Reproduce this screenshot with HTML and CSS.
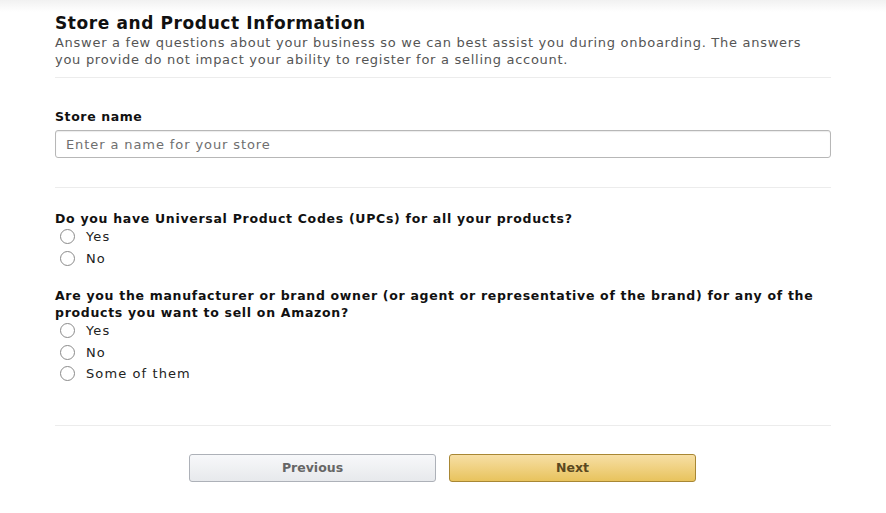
FILE: index.html
```html
<!DOCTYPE html>
<html>
<head>
<meta charset="utf-8">
<link rel="stylesheet" href="styles.css">
</head>
<body>
<div class="topshade"></div>
<main class="page">
  <section class="intro">
    <h1 class="title">Store and Product Information</h1>
    <p class="desc">Answer a few questions about your business so we can best assist you during onboarding. The answers you provide do not impact your ability to register for a selling account.</p>
  </section>
  <section class="block store">
    <label class="label" for="store">Store name</label>
    <input class="input" id="store" type="text" placeholder="Enter a name for your store">
  </section>
  <section class="block questions">
    <div class="question">
      <div class="qtext">Do you have Universal Product Codes (UPCs) for all your products?</div>
      <label class="radio"><span class="dot"></span>Yes</label>
      <label class="radio"><span class="dot"></span>No</label>
    </div>
    <div class="question">
      <div class="qtext">Are you the manufacturer or brand owner (or agent or representative of the brand) for any of the products you want to sell on Amazon?</div>
      <label class="radio"><span class="dot"></span>Yes</label>
      <label class="radio"><span class="dot"></span>No</label>
      <label class="radio"><span class="dot"></span>Some of them</label>
    </div>
  </section>
  <section class="actions">
    <button class="btn prev">Previous</button>
    <button class="btn next">Next</button>
  </section>
</main>
</body>
</html>
```
FILE: styles.css
```css
* { box-sizing: border-box; }
html, body { margin: 0; padding: 0; background: #fff; }
body {
  font-family: "DejaVu Sans", "Open Sans", sans-serif;
  color: #111;
  width: 886px;
  height: 513px;
  overflow: hidden;
  position: relative;
}
.topshade {
  position: absolute;
  top: 0; left: 0; right: 0;
  height: 12px;
  background: linear-gradient(to bottom, #f1f1f1, rgba(255,255,255,0));
}
.page {
  position: relative;
  width: 776px;
  margin-left: 55px;
  padding-top: 12px;
}
.title {
  margin: 0;
  font-size: 17px;
  font-weight: 700;
  letter-spacing: 0.6px;
  line-height: 22px;
  color: #111;
}
.desc {
  margin: 0;
  font-size: 13px;
  letter-spacing: 0.72px;
  line-height: 17px;
  color: #555;
  padding-bottom: 9px;
  border-bottom: 1px solid #ececec;
}
.store {
  padding-top: 31px;
  padding-bottom: 29px;
  border-bottom: 1px solid #ececec;
}
.label {
  display: block;
  font-size: 12.5px;
  font-weight: 700;
  letter-spacing: 0.6px;
  line-height: 16px;
  margin-bottom: 5px;
}
.input {
  display: block;
  width: 100%;
  height: 28px;
  border: 1px solid #b7b7b7;
  border-radius: 3px;
  padding: 0 10px;
  font-family: inherit;
  font-size: 13px;
  letter-spacing: 0.9px;
  color: #111;
  box-shadow: inset 0 1px 1px rgba(0,0,0,0.08);
}
.input::placeholder { color: #6f6f6f; }
.questions {
  padding-top: 22px;
  padding-bottom: 40px;
  border-bottom: 1px solid #ececec;
}
.question + .question { margin-top: 18px; }
.qtext {
  font-size: 12.5px;
  font-weight: 700;
  letter-spacing: 0.7px;
  line-height: 17px;
  margin-bottom: -1px;
}
.radio {
  display: flex;
  align-items: center;
  gap: 11px;
  height: 21.5px;
  padding-left: 5px;
  font-size: 13px;
  letter-spacing: 1.1px;
  color: #222;
}
.dot {
  width: 15px;
  height: 15px;
  border: 1px solid #8a8a8a;
  border-radius: 50%;
  background: #fff;
}
.actions {
  display: flex;
  gap: 13px;
  padding-left: 134px;
  padding-top: 28px;
}
.btn {
  width: 247px;
  height: 28px;
  border-radius: 3px;
  font-family: inherit;
  font-size: 12.5px;
  font-weight: 700;
  cursor: pointer;
}
.prev {
  border: 1px solid #adb1b8;
  background: linear-gradient(to bottom, #f7f8fa, #e7e9ec);
  color: #666;
}
.next {
  border: 1px solid #a88734;
  background: linear-gradient(to bottom, #f7dfa5, #e8c35d);
  color: #5a4820;
}
```
